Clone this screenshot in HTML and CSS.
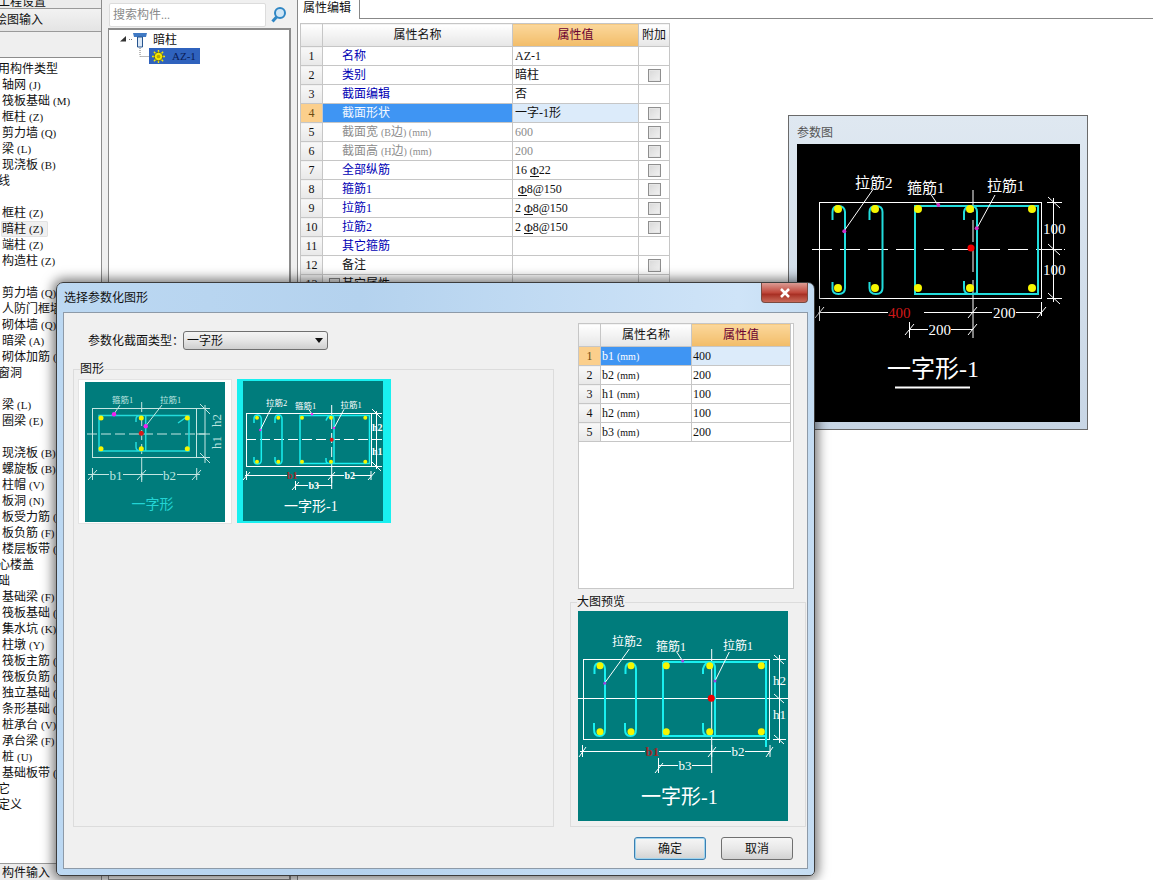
FILE: index.html
```html
<!DOCTYPE html>
<html lang="zh">
<head>
<meta charset="utf-8">
<title>选择参数化图形</title>
<link rel="stylesheet" href="styles.css">
</head>
<body>
<div class="app">
  <aside class="nav">
    <div class="nav-top"><span class="nav-top-text">工程设置</span></div>
    <div class="nav-tab"><span class="nav-tab-text">绘图输入</span></div>
    <div class="nav-head"></div>
    <ul class="nav-list">
      <li class="g">常用构件类型</li>
      <li>轴网 <span class="k">(J)</span></li><li>筏板基础 <span class="k">(M)</span></li><li>框柱 <span class="k">(Z)</span></li><li>剪力墙 <span class="k">(Q)</span></li><li>梁 <span class="k">(L)</span></li><li>现浇板 <span class="k">(B)</span></li>
      <li class="g">轴线</li>
      <li class="g">&nbsp;</li>
      <li>框柱 <span class="k">(Z)</span></li><li><span class="hot">暗柱 <span class="k">(Z)</span></span></li><li>端柱 <span class="k">(Z)</span></li><li>构造柱 <span class="k">(Z)</span></li>
      <li class="g">&nbsp;</li>
      <li>剪力墙 <span class="k">(Q)</span></li><li>人防门框墙 <span class="k">(R)</span></li><li>砌体墙 <span class="k">(Q)</span></li><li>暗梁 <span class="k">(A)</span></li><li>砌体加筋 <span class="k">(Y)</span></li>
      <li class="g">门窗洞</li>
      <li class="g">&nbsp;</li>
      <li>梁 <span class="k">(L)</span></li><li>圈梁 <span class="k">(E)</span></li>
      <li class="g">&nbsp;</li>
      <li>现浇板 <span class="k">(B)</span></li><li>螺旋板 <span class="k">(B)</span></li><li>柱帽 <span class="k">(V)</span></li><li>板洞 <span class="k">(N)</span></li><li>板受力筋 <span class="k">(S)</span></li><li>板负筋 <span class="k">(F)</span></li><li>楼层板带 <span class="k">(H)</span></li>
      <li class="g">空心楼盖</li>
      <li class="g">基础</li>
      <li>基础梁 <span class="k">(F)</span></li><li>筏板基础 <span class="k">(M)</span></li><li>集水坑 <span class="k">(K)</span></li><li>柱墩 <span class="k">(Y)</span></li><li>筏板主筋 <span class="k">(R)</span></li><li>筏板负筋 <span class="k">(X)</span></li><li>独立基础 <span class="k">(P)</span></li><li>条形基础 <span class="k">(T)</span></li><li>桩承台 <span class="k">(V)</span></li><li>承台梁 <span class="k">(F)</span></li><li>桩 <span class="k">(U)</span></li><li>基础板带 <span class="k">(W)</span></li>
      <li class="g">其它</li>
      <li class="g">自定义</li>
    </ul>
    <div class="nav-foot">构件输入</div>
  </aside>

  <section class="tree-pane">
    <div class="search">
      <div class="search-input">搜索构件...</div>
      <svg class="search-icon" width="20" height="20" viewBox="0 0 20 20"><circle class="mag-ring" cx="11" cy="8" r="5"/><path class="mag-handle" d="M7.500 12L3.500 16.500"/></svg>
    </div>
    <div class="tree">
      <div class="tree-row">
        <svg width="43" height="17" viewBox="0 0 43 17"><path class="exp" d="M11 10.500L17 5V10.500Z"/><path class="dots" d="M20 8.500H23"/><path class="fun-top" d="M24 2H38L37 6H25Z"/><path class="fun-stem" d="M28.500 6H33.500V16H28.500Z"/></svg>
        <span class="tree-label">暗柱</span>
      </div>
      <div class="tree-row">
        <svg width="40" height="16" viewBox="0 0 40 16"><path class="dots" d="M31 0V8.500H40"/></svg>
        <span class="tree-sel">
          <svg width="13" height="13" viewBox="0 0 14 14"><path class="gear-sp" d="M7 0V14M0 7H14M2 2L12 12M12 2L2 12"/><circle class="gear-o" cx="7" cy="7" r="4.500"/><circle class="gear-i" cx="7" cy="7" r="2"/></svg>
          <span>AZ-1</span>
        </span>
      </div>
    </div>
  </section>

  <main class="props">
    <div class="tabs"><div class="tab">属性编辑</div><div class="tab-rest"></div></div>
    <table class="grid grid-main">
      <colgroup><col class="c-n"><col class="c-name"><col class="c-val"><col class="c-add"></colgroup>
      <thead><tr><th></th><th>属性名称</th><th class="hv">属性值</th><th>附加</th></tr></thead>
      <tbody>
        <tr><th>1</th><td class="nm">名称</td><td>AZ-1</td><td></td></tr>
        <tr><th>2</th><td class="nm">类别</td><td>暗柱</td><td><span class="cb"></span></td></tr>
        <tr><th>3</th><td class="nm">截面编辑</td><td>否</td><td></td></tr>
        <tr class="sel"><th>4</th><td class="nm">截面形状</td><td>一字-1形</td><td><span class="cb"></span></td></tr>
        <tr><th>5</th><td class="nm off">截面宽 <span class="k2">(B</span>边<span class="k2">) (mm)</span></td><td class="off">600</td><td><span class="cb"></span></td></tr>
        <tr><th>6</th><td class="nm off">截面高 <span class="k2">(H</span>边<span class="k2">) (mm)</span></td><td class="off">200</td><td><span class="cb"></span></td></tr>
        <tr><th>7</th><td class="nm">全部纵筋</td><td>16 <span class="rb">Φ</span>22</td><td><span class="cb"></span></td></tr>
        <tr><th>8</th><td class="nm">箍筋1</td><td>&nbsp;<span class="rb">Φ</span>8@150</td><td><span class="cb"></span></td></tr>
        <tr><th>9</th><td class="nm">拉筋1</td><td>2 <span class="rb">Φ</span>8@150</td><td><span class="cb"></span></td></tr>
        <tr><th>10</th><td class="nm">拉筋2</td><td>2 <span class="rb">Φ</span>8@150</td><td><span class="cb"></span></td></tr>
        <tr><th>11</th><td class="nm">其它箍筋</td><td></td><td></td></tr>
        <tr><th>12</th><td class="nm blk">备注</td><td></td><td><span class="cb"></span></td></tr>
        <tr><th>13</th><td class="nm blk"><span class="plus"></span>其它属性</td><td></td><td></td></tr>
      </tbody>
    </table>
  </main>
</div>

<section class="param-win">
  <div class="param-title">参数图</div>
  <svg class="param-pic" width="283" height="278" viewBox="0 0 283 278">
    <rect class="w" x="22.500" y="58.500" width="222" height="96"/>
    <path class="wd" d="M15 105.500H268"/>
    <path class="wd2" d="M176 46V158"/>
    <path class="w" d="M176 158V194"/>
    <path class="c2" d="M118 62H241V150H118Z M180 150V68q0-6-6-6t-7 6V76 M167 137V144q0 6 6 6t7-1"/>
    <path class="c2" d="M35.500 76V68q0-6 6-6t6.500 6V144q0 6-6.500 6t-6-6V138"/>
    <path class="c2" d="M72.500 76V68q0-6 6.500-6t6.500 6V144q0 6-6.500 6t-6.500-6V138"/>
    <g class="y">
      <circle cx="41" cy="65" r="4"/><circle cx="78" cy="65" r="4"/><circle cx="121" cy="65" r="4"/><circle cx="173" cy="65" r="4"/><circle cx="235" cy="65" r="4"/>
      <circle cx="41" cy="144" r="4"/><circle cx="78" cy="144" r="4"/><circle cx="121" cy="144" r="4"/><circle cx="173" cy="144" r="4"/><circle cx="235" cy="144" r="4"/>
    </g>
    <circle class="r" cx="174" cy="104" r="3.500"/>
    <path class="w" d="M47 87L77 44M141 61L133 49M180 84L198 51"/>
    <g class="m"><circle cx="47.300" cy="87.300" r="2"/><circle cx="141.300" cy="61" r="2"/><circle cx="179.700" cy="84.300" r="2"/></g>
    <text class="t15" x="58" y="44">拉筋2</text>
    <text class="t15" x="110" y="48.500">箍筋1</text>
    <text class="t15" x="190" y="47">拉筋1</text>
    <text class="t15" x="246" y="90">100</text>
    <text class="t15" x="246" y="131">100</text>
    <path class="w" d="M256.500 54V158M250 58.500H265M250 105.500H265M250 154.500H265M251 53L263 64M251 100L263 111M251 149L263 160"/>
    <path class="w" d="M21.500 168.500H91M127 168.500H195M219 168.500H245M22.500 162V177M244.500 158V172M18 174L27 163M171 174L180 163M240 174L249 163"/>
    <path class="w" d="M112 185.500H131M154 185.500H176M112.500 178V194M108 191L117 180M171 191L180 180"/>
    <text class="t15 red" x="91" y="173.500">400</text>
    <text class="t15" x="196" y="173.500">200</text>
    <text class="t15" x="131.500" y="191">200</text>
    <text class="t24" x="90" y="233">一字形-1</text>
    <path class="w2" d="M98 243.500H173"/>
  </svg>
</section>

<section class="dialog">
  <div class="dlg-title">
    <span>选择参数化图形</span>
    <button class="close" type="button"><svg width="12" height="10" viewBox="0 0 12 10"><path class="x" d="M2 1L10 9M10 1L2 9"/></svg></button>
  </div>
  <div class="client">
    <div class="client-main">
      <div class="col-left">
        <div class="sel-row">
          <label class="sel-label">参数化截面类型：</label>
          <div class="select"><span>一字形</span><i class="caret"></i></div>
        </div>
        <fieldset class="group shapes">
          <legend>图形</legend>
          <div class="tiles">
            <div class="tile">
              <svg class="pic" width="140" height="140" viewBox="0 0 140 140">
                <rect class="p" x="7.500" y="26.500" width="104" height="49"/>
                <path class="pd" d="M2 52H120"/>
                <path class="pd" d="M56.700 20V103"/>
                <path class="c1" d="M14 33.500H104V69H14Z M60.700 69V33.500M51 40V37q0-3.500 5-3.500M51 60V65q0 4 5 4M93 41L103 34"/>
                <g class="y"><circle cx="16" cy="36" r="2.500"/><circle cx="56.300" cy="36" r="2.500"/><circle cx="102.300" cy="36" r="2.500"/><circle cx="16" cy="66.700" r="2.500"/><circle cx="56.300" cy="66.700" r="2.500"/><circle cx="102.300" cy="66.700" r="2.500"/></g>
                <circle class="r2" cx="56.300" cy="51.300" r="2.500"/>
                <path class="p" d="M29 32L35 23M60.700 44L77 23"/>
                <g class="m2"><circle cx="29" cy="32.300" r="2.200"/><circle cx="60.700" cy="44.300" r="2.200"/></g>
                <text class="t8 pale" x="27" y="21">箍筋1</text>
                <text class="t8 pale" x="75" y="21">拉筋1</text>
                <path class="p" d="M120 23V81M112 26.500H125M112 52H125M112 75.500H125M115 22L125 32M115 71L125 81"/>
                <text class="t13 pale" x="136" y="45" transform="rotate(-90 136 45)">h2</text>
                <text class="t13 pale" x="136" y="67" transform="rotate(-90 136 67)">h1</text>
                <path class="p" d="M3 92.500H24M38 92.500H78M92 92.500H115M7.500 86V98M56.700 86V98M111.700 86V98M3 98L12 88M52 98L61 88M107 98L116 88"/>
                <text class="t13 pale" x="24.500" y="97.500">b1</text>
                <text class="t13 pale" x="78" y="97.500">b2</text>
                <text class="t14 aqua" x="46.500" y="126.500">一字形</text>
              </svg>
            </div>
            <div class="tile tile-on">
              <svg class="pic" width="140" height="140" viewBox="0 0 140 140">
                <rect class="p bright" x="3.500" y="32.500" width="125" height="53"/>
                <path class="pd bright" d="M3 58.500H140"/>
                <path class="pd bright" d="M88.700 24V102"/>
                <path class="c1 cy" d="M57 34.500H126.500V82.500H57Z M91 82.500V39q0-4.500-3-4.500t-5 5M83 77V79q0 3.500 3 3.500"/>
                <path class="c1 cy" d="M11 42V38q0-4 3.500-4t3.800 4V79q0 4-3.800 4t-3.500-4V76"/>
                <path class="c1 cy" d="M32 42V38q0-4 3.500-4t3.500 4V79q0 4-3.500 4t-3.500-4V76"/>
                <g class="y"><circle cx="14" cy="36.700" r="2"/><circle cx="35.300" cy="36.700" r="2"/><circle cx="59" cy="36.700" r="2"/><circle cx="88" cy="36.700" r="2"/><circle cx="122.300" cy="36.700" r="2"/><circle cx="14" cy="80.700" r="2"/><circle cx="35.300" cy="80.700" r="2"/><circle cx="59" cy="80.700" r="2"/><circle cx="88" cy="80.700" r="2"/><circle cx="122.300" cy="80.700" r="2"/></g>
                <circle class="r2" cx="88.700" cy="58.700" r="2"/>
                <path class="p bright" d="M17.300 49L28.300 26.700M69 33L65.700 28.300M91 47L101 28.300"/>
                <g class="m2"><circle cx="17.300" cy="49" r="1.200"/><circle cx="69" cy="33.300" r="1.200"/><circle cx="91" cy="47" r="1.200"/></g>
                <text class="t8 wt" x="23" y="24.500">拉筋2</text>
                <text class="t8 wt" x="52" y="28">箍筋1</text>
                <text class="t8 wt" x="97.500" y="26.500">拉筋1</text>
                <path class="p bright" d="M133.500 30V88M128 32.500H139M128 58.500H139M128 85.500H139M129 28L138 37M129 81L138 90"/>
                <text class="t9 wt" x="129" y="50">h2</text>
                <text class="t9 wt" x="129" y="73.500">h1</text>
                <path class="p bright" d="M2 94.500H44M53 94.500H101M110 94.500H128.500M3.500 90V99M88.700 90V108M128 90V99M0 99L7 91M85 99L92 91M125 99L132 91"/>
                <text class="t9 dred" x="44" y="98">b1</text>
                <text class="t9 wt" x="101.500" y="98">b2</text>
                <path class="p bright" d="M52.500 104.500H65M75 104.500H89M52.500 100V109M49 109L56 101"/>
                <text class="t9 wt" x="65.500" y="108">b3</text>
                <text class="t14 wt" x="41" y="130">一字形-1</text>
              </svg>
            </div>
          </div>
        </fieldset>
      </div>
      <div class="col-right">
        <div class="side-box">
          <table class="grid grid-side">
            <colgroup><col class="s-n"><col class="s-name"><col class="s-val"></colgroup>
            <thead><tr><th></th><th>属性名称</th><th class="hv">属性值</th></tr></thead>
            <tbody>
              <tr class="sel"><th>1</th><td>b1 <span class="k2">(mm)</span></td><td>400</td></tr>
              <tr><th>2</th><td>b2 <span class="k2">(mm)</span></td><td>200</td></tr>
              <tr><th>3</th><td>h1 <span class="k2">(mm)</span></td><td>100</td></tr>
              <tr><th>4</th><td>h2 <span class="k2">(mm)</span></td><td>100</td></tr>
              <tr><th>5</th><td>b3 <span class="k2">(mm)</span></td><td>200</td></tr>
            </tbody>
          </table>
        </div>
        <fieldset class="group preview">
          <legend>大图预览</legend>
          <svg class="pic" width="210" height="210" viewBox="0 0 210 210">
            <rect class="p bright" x="5.500" y="48.500" width="186" height="80"/>
            <path class="p bright" d="M0 87.500H210M133.700 38V162"/>
            <path class="c2 cy" d="M85 51H188V136M188 125H85V51M137 125V58q0-7-5-7t-7 7V63M125 112V118q0 7 6 7"/>
            <path class="c2 cy" d="M16.500 63V58q0-6 5-6t5.500 6V118q0 7-5.500 7t-5.500-7V112"/>
            <path class="c2 cy" d="M47.500 63V58q0-6 5-6t5.500 6V118q0 7-5.500 7t-5.500-7V112"/>
            <g class="y"><circle cx="22" cy="54.700" r="3.500"/><circle cx="53" cy="54.700" r="3.500"/><circle cx="88.300" cy="54.700" r="3.500"/><circle cx="131.700" cy="54.700" r="3.500"/><circle cx="183.300" cy="54.700" r="3.500"/><circle cx="22" cy="120.700" r="3.500"/><circle cx="53" cy="120.700" r="3.500"/><circle cx="88.300" cy="120.700" r="3.500"/><circle cx="131.700" cy="120.700" r="3.500"/><circle cx="183.300" cy="120.700" r="3.500"/></g>
            <circle class="r" cx="133.300" cy="87.300" r="3.500"/>
            <path class="p bright" d="M26.700 72L51.300 38M104.700 50L98.700 41M137 70L151.300 41"/>
            <g class="m3"><circle cx="26.700" cy="72.300" r="1.500"/><circle cx="104.700" cy="50" r="1.500"/><circle cx="137" cy="70" r="1.500"/></g>
            <text class="t12 wt" x="34" y="35">拉筋2</text>
            <text class="t12 wt" x="78" y="40">箍筋1</text>
            <text class="t12 wt" x="145" y="38.500">拉筋1</text>
            <path class="p bright" d="M201.500 44V132M195 48.500H208M195 87.500H208M195 128.500H208M196 44L206 53M196 83L206 92M196 124L206 133"/>
            <text class="t13 wt" x="195" y="73.500">h2</text>
            <text class="t13 wt" x="195" y="107.500">h1</text>
            <path class="p bright" d="M2 140.500H67M81 140.500H153M167 140.500H192M4.500 134V146M133.700 134V146M192 134V146M1 146L8 136M130 146L138 136M188 146L195 136"/>
            <text class="t13 dred" x="67.500" y="144.500">b1</text>
            <text class="t13 wt" x="153.500" y="144.500">b2</text>
            <path class="p bright" d="M80.500 154.500H100M114 154.500H134M80.500 147V162M77 162L85 152"/>
            <text class="t13 wt" x="100.500" y="158.500">b3</text>
            <text class="t20 wt" x="63" y="193">一字形-1</text>
          </svg>
        </fieldset>
      </div>
    </div>
    <div class="client-foot">
      <button class="btn btn-main" type="button">确定</button>
      <button class="btn" type="button">取消</button>
    </div>
  </div>
</section>
</body>
</html>
```

FILE: styles.css
```css
* { box-sizing: border-box; }
html, body { margin: 0; padding: 0; }
body {
  width: 1153px;
  height: 880px;
  overflow: hidden;
  position: relative;
  background: #f0f0f0;
  color: #111;
  font: 12px/16px "Liberation Serif", "Noto Sans CJK SC", serif;
}
.app { display: flex; height: 880px; }
.k { font-size: 11px; }
.k2 { font-size: 10px; }

/* left navigation */
.nav {
  width: 102px;
  flex: none;
  display: flex;
  flex-direction: column;
  overflow: hidden;
  border-right: 1px solid #8c8c8c;
  background: #fff;
}
.nav-top { height: 9px; overflow: hidden; background: #ececec; border-bottom: 1px solid #9a9a9a; }
.nav-top-text { display: block; margin: -6px 0 0 -2px; }
.nav-tab { height: 23px; overflow: hidden; background: linear-gradient(#f2f2f2, #e4e4e4); border-bottom: 1px solid #9a9a9a; line-height: 23px; }
.nav-tab-text { display: block; margin-left: -5px; }
.nav-head { height: 26px; background: #efefef; border-bottom: 1px solid #8c8c8c; }
.nav-list { list-style: none; margin: 0; padding: 3px 0 0; flex: 1; overflow: hidden; }
.nav-list li { height: 16px; padding-left: 2px; white-space: nowrap; }
.nav-list li.g { margin-left: -14px; padding-left: 0; }
.hot { display: inline-block; height: 16px; margin-left: -1px; padding-left: 1px; width: 47px; background: #f0f0f0; border-radius: 2px; box-shadow: inset 0 0 0 1px #e2e2e2; }
.nav-foot { height: 17px; flex: none; padding-left: 2px; background: #ececec; border-top: 1px solid #9a9a9a; line-height: 18px; }

/* tree */
.tree-pane { width: 183px; flex: none; margin: 0 6px; display: flex; flex-direction: column; }
.search { display: flex; align-items: center; height: 28px; padding: 3px 0 1px 1px; }
.search-input { width: 157px; height: 24px; padding: 3px; background: #fff; border: 1px solid #dcdcdc; border-radius: 2px; color: #8a8a8a; line-height: 17px; }
.search-icon { margin-left: 3px; }
.mag-ring { fill: #cfe6f6; stroke: #2f86c4; stroke-width: 2; }
.mag-handle { fill: none; stroke: #2f86c4; stroke-width: 3; }
.tree { flex: 1; background: #fff; border: 1px solid #8c8c8c; border-width: 2px 2px 1px 1px; }
.tree-row { display: flex; align-items: center; height: 16px; }
.tree-row:first-child { height: 17px; margin-top: 1px; }
.exp { fill: #333; }
.dots { fill: none; stroke: #777; stroke-dasharray: 1 1; }
.fun-top { fill: #3f79c4; }
.fun-stem { fill: #dbe8f6; stroke: #26548f; }
.tree-label { margin-left: 1px; }
.tree-sel { display: flex; align-items: center; gap: 7px; width: 51px; height: 16px; padding-left: 3px; background: #2f62bd; color: #0a1b55; font-size: 11px; }
.gear-sp { stroke: #f6e800; stroke-width: 1.500; fill: none; }
.gear-o { fill: #f6e800; stroke: #6a6a20; }
.gear-i { fill: #b8a800; }

/* properties */
.props { flex: 1; background: #fff; border-left: 1px solid #888; }
.tabs { display: flex; height: 19px; }
.tab { width: 62px; padding-left: 5px; height: 19px; background: #fff; border-right: 1px solid #888; line-height: 17px; }
.tab-rest { flex: 1; border-bottom: 1px solid #888; }
.grid { border-collapse: collapse; table-layout: fixed; background: #fff; }
.grid th, .grid td { height: 19px; padding: 1px 2px 0; border: 1px solid #c6c6c6; font-weight: normal; line-height: 15px; overflow: hidden; white-space: nowrap; }
.grid thead th { height: 23px; text-align: center; background: linear-gradient(#fff, #e6e6e6); }
.grid thead th.hv { color: #6a0030; background: linear-gradient(#fbd89c, #f2bc68); }
.grid tbody th { text-align: center; background: linear-gradient(#f8f8f8, #e8e8e8); }
.grid .sel th { background: #fbcf8c; color: #6b4a10; }
.grid-main { width: 369px; margin: 4px 0 0 2px; }
.c-n { width: 22px; }
.c-name { width: 190px; }
.c-val { width: 126px; }
.c-add { width: 31px; }
.grid-main td.nm { padding-left: 19px; color: #0000b4; }
.grid-main td.off { color: #8c8c8c; }
.grid-main td.blk { color: #111; }
.grid-main .sel td.nm { background: #3f95f3; color: #f4f8ff; }
.grid-main .sel td:nth-child(3) { background: #dcebfa; }
.grid-main td:last-child { padding: 0; text-align: center; }
.cb { display: block; width: 13px; height: 13px; margin: 0 auto; border: 1px solid #8f8f8f; background: linear-gradient(135deg, #d8d8d8, #f2f2f2); box-shadow: inset 0 0 0 1px #e6e6e6; }
.rb { display: inline-block; height: 11px; line-height: 10px; font-size: 12px; border-bottom: 1px solid #111; vertical-align: -1px; }
.plus { display: inline-block; width: 11px; height: 11px; margin: 0 2px 0 -13px; vertical-align: -1px; border: 1px solid #888; background: #eee; }

/* parameter window */
.param-win {
  position: absolute;
  left: 788px;
  top: 115px;
  width: 300px;
  height: 315px;
  padding: 0 8px 8px;
  border: 1px solid #6a6a6a;
  background: linear-gradient(#dfe8f1, #c8d6e5);
}
.param-title { height: 28px; color: #555; line-height: 35px; }
.param-pic { display: block; background: #000; }

/* svg drawing */
svg { flex: none; }
svg text { font-family: "Liberation Serif", "Noto Sans CJK SC", serif; fill: #fff; }
.w { fill: none; stroke: #fff; stroke-width: 1; }
.w2 { fill: none; stroke: #fff; stroke-width: 2; }
.wd { fill: none; stroke: #fff; stroke-dasharray: 20 8; }
.wd2 { fill: none; stroke: #fff; stroke-dasharray: 22 8; }
.c2 { fill: none; stroke: #22dcdc; stroke-width: 2; }
.c1 { fill: none; stroke: #22dcdc; stroke-width: 1.500; }
.cy { stroke: #19f0f0; }
.y { fill: #f6f600; }
.r { fill: #f00000; }
.r2 { fill: #d81818; }
.m { fill: #d030c8; }
.m2 { fill: #f020f0; }
.m3 { fill: #a040e0; }
.p { fill: none; stroke: #c5e6e2; stroke-width: 1; }
.pd { fill: none; stroke: #c5e6e2; stroke-width: 1; stroke-dasharray: 10 4; }
.bright { stroke: #fff; }
svg text.red { fill: #d01818; }
svg text.dred { fill: #a02a2a; font-weight: bold; }
svg text.pale { fill: #bfe6e0; }
svg text.aqua { fill: #22d4d4; }
svg text.wt { fill: #fff; }
.t8 { font-size: 8.500px; }
.t9 { font-size: 10px; font-weight: bold; }
.t12 { font-size: 12px; }
.t13 { font-size: 13px; }
.t14 { font-size: 14px; }
.t15 { font-size: 15px; }
.t20 { font-size: 20px; }
.t24 { font-size: 24px; }

/* dialog */
.dialog {
  position: absolute;
  left: 56px;
  top: 282px;
  width: 759px;
  height: 594px;
  display: flex;
  flex-direction: column;
  padding: 0 6px 6px;
  border: 1px solid #3c3c3c;
  border-radius: 7px 7px 5px 5px;
  background: linear-gradient(90deg, #bcd8f2, #b4d2ee 40%, #cfe4f8 90%, #c4dcf2);
  box-shadow: 0 0 12px 3px rgba(0, 0, 0, .55);
}
.dlg-title { height: 29px; flex: none; display: flex; align-items: center; justify-content: space-between; padding-left: 1px; color: #111; }
.close {
  width: 47px;
  height: 20px;
  margin: -9px 0 0;
  padding: 0;
  display: flex;
  align-items: center;
  justify-content: center;
  border: 1px solid #7a4a40;
  border-top: 0;
  border-radius: 0 0 4px 4px;
  background: linear-gradient(#dc9c94, #c0483c 50%, #a83024 60%, #c86a5a);
}
.x { fill: none; stroke: #fff; stroke-width: 2.500; }
.client { flex: 1; display: flex; flex-direction: column; background: #f0f0f0; border: 1px solid #8d9aa8; }
.client-main { height: 514px; flex: none; display: flex; }
.col-left { width: 490px; flex: none; margin-left: 9px; display: flex; flex-direction: column; }
.sel-row { display: flex; align-items: center; height: 19px; margin-top: 18px; padding-left: 15px; }
.sel-label { width: 95px; flex: none; white-space: nowrap; }
.select { width: 145px; height: 19px; display: flex; align-items: center; justify-content: space-between; padding: 0 3px; border: 1px solid #707070; border-radius: 3px; background: linear-gradient(#f4f4f4, #e8e8e8 45%, #cfcfcf); }
.caret { width: 0; height: 0; border: 4px solid transparent; border-top: 5px solid #111; border-bottom: 0; margin-right: 1px; }
.group { margin: 0; padding: 0; min-width: 0; border: 1px solid #dcdcdc; }
.group legend { padding: 0; line-height: 12px; }
.shapes { width: 481px; flex: 1; margin-top: 13px; padding: 4px 0 0 4px; }
.shapes legend { margin-left: 2px; }
.tiles { display: flex; gap: 5px; }
.tile { width: 154px; height: 145px; padding: 3px 0 0 7px; background: #fff; box-shadow: inset 0 0 0 1px #e4e4e4; }
.tile-on { height: 144px; padding: 2px 0 0 6px; background: #19f0f0; box-shadow: none; }
.pic { display: block; background: #007c7c; }
.col-right { width: 236px; flex: none; margin-left: 7px; padding-top: 10px; display: flex; flex-direction: column; }
.side-box { width: 216px; height: 266px; flex: none; margin-left: 8px; background: #fff; border: 1px solid #c8c8c8; }
.grid-side { width: 212px; margin: -1px 0 0 -1px; }
.s-n { width: 22px; }
.s-name { width: 91px; }
.s-val { width: 99px; }
.grid-side td { padding-left: 1px; }
.grid-side .sel td:nth-child(2) { background: #3f95f3; color: #fff; }
.grid-side .sel td:nth-child(3) { background: #dcebfa; }
.preview { flex: 1; margin-top: 7px; padding: 3px 0 0 7px; }
.preview legend { margin-left: -1px; }
.client-foot { flex: 1; display: flex; justify-content: flex-end; gap: 15px; padding: 10px 14px 0 0; }
.btn { width: 72px; height: 23px; padding: 0; border: 1px solid #707070; border-radius: 3px; background: linear-gradient(#f6f6f6, #e8e8e8 50%, #d2d2d2); color: #111; font: inherit; }
.btn-main { border-color: #3c7fb1; box-shadow: inset 0 0 0 1px #9fd4ee; }
```
